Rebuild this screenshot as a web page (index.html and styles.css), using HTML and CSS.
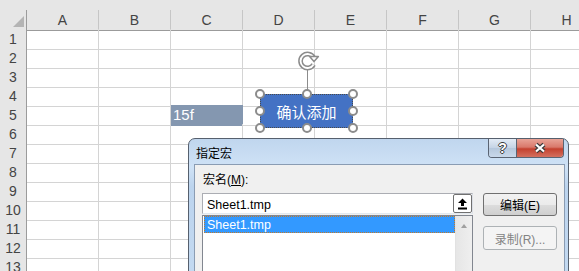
FILE: index.html
```html
<!DOCTYPE html>
<html lang="zh-CN">
<head>
    <meta charset="UTF-8">
    <title>指定宏</title>
    <link rel="stylesheet" href="styles.css">
</head>
<body>
    <div class="sheet">
        <div class="band"></div>
        <div class="row head">
            <div class="corner"><span class="tri"></span></div>
            <div>A</div><div>B</div><div>C</div><div>D</div><div>E</div><div>F</div><div>G</div><div>H</div>
        </div>
        <div class="row"><div class="num">1</div><div></div><div></div><div></div><div></div><div></div><div></div><div></div><div></div></div>
        <div class="row"><div class="num">2</div><div></div><div></div><div></div><div></div><div></div><div></div><div></div><div></div></div>
        <div class="row"><div class="num">3</div><div></div><div></div><div></div><div></div><div></div><div></div><div></div><div></div></div>
        <div class="row"><div class="num">4</div><div></div><div></div><div></div><div></div><div></div><div></div><div></div><div></div></div>
        <div class="row"><div class="num">5</div><div></div><div></div><div class="fill">15f</div><div></div><div></div><div></div><div></div><div></div></div>
        <div class="row"><div class="num">6</div><div></div><div></div><div></div><div></div><div></div><div></div><div></div><div></div></div>
        <div class="row"><div class="num">7</div><div></div><div></div><div></div><div></div><div></div><div></div><div></div><div></div></div>
        <div class="row"><div class="num">8</div><div></div><div></div><div></div><div></div><div></div><div></div><div></div><div></div></div>
        <div class="row"><div class="num">9</div><div></div><div></div><div></div><div></div><div></div><div></div><div></div><div></div></div>
        <div class="row"><div class="num">10</div><div></div><div></div><div></div><div></div><div></div><div></div><div></div><div></div></div>
        <div class="row"><div class="num">11</div><div></div><div></div><div></div><div></div><div></div><div></div><div></div><div></div></div>
        <div class="row"><div class="num">12</div><div></div><div></div><div></div><div></div><div></div><div></div><div></div><div></div></div>
        <div class="row"><div class="num">13</div><div></div><div></div><div></div><div></div><div></div><div></div><div></div><div></div></div>

        <!-- selected button shape -->
        <div class="sel">
            <svg class="rot" width="26" height="24" viewBox="0 0 26 24">
                <path d="M18.6 8.5 A7 7 0 1 0 18.6 15.5" fill="none" stroke="#8c8c8c" stroke-width="4.8"/>
                <path d="M18.6 8.5 A7 7 0 1 0 18.6 15.5" fill="none" stroke="#fff" stroke-width="1.8"/>
                <polygon points="14.6,7.5 23.4,7.5 19,12.6" fill="#fff" stroke="#8c8c8c" stroke-width="1.5" stroke-linejoin="round"/>
            </svg>
            <div class="stem"></div>
            <div class="shape">确认添加</div>
            <span class="h tl"></span><span class="h tm"></span><span class="h tr"></span>
            <span class="h ml"></span><span class="h mr"></span>
            <span class="h bl"></span><span class="h bm"></span><span class="h br"></span>
        </div>

        <!-- assign macro dialog -->
        <div class="dialog">
            <div class="titlebar">
                <span class="title">指定宏</span>
                <div class="caption">
                    <span class="cap-help">?</span>
                    <span class="cap-close">
                        <svg width="16" height="12" viewBox="0 0 16 12">
                            <path d="M4 2.5 L12 9.5 M12 2.5 L4 9.5" stroke="#3b3b3b" stroke-width="4.4"/>
                            <path d="M4 2.5 L12 9.5 M12 2.5 L4 9.5" stroke="#fff" stroke-width="2.2"/>
                        </svg>
                    </span>
                </div>
            </div>
            <div class="client">
                <div class="left-col">
                    <div class="label">宏名(<u>M</u>):</div>
                    <div class="namebox">
                        <span class="value">Sheet1.tmp</span>
                        <span class="pick">
                            <svg width="11" height="12" viewBox="0 0 11 12">
                                <polygon points="5.5,0.5 10,5 7,5 7,8 4,8 4,5 1,5" fill="#000"/>
                                <rect x="1" y="9.5" width="9" height="2" fill="#000"/>
                            </svg>
                        </span>
                    </div>
                    <div class="listbox">
                        <div class="items">
                            <div class="item selected">Sheet1.tmp</div>
                        </div>
                        <div class="vscroll"><span class="up"></span></div>
                    </div>
                </div>
                <div class="right-col">
                    <button class="btn">编辑(E)</button>
                    <button class="btn disabled">录制(R)...</button>
                </div>
            </div>
        </div>
    </div>
</body>
</html>
```

FILE: styles.css
```css
body {
    margin: 0;
    font-family: "Liberation Sans", "Noto Sans CJK SC", sans-serif;
    background: #fff;
    overflow: hidden;
}
.sheet {
    position: relative;
    width: 579px;
    height: 271px;
    overflow: hidden;
}
.band {
    height: 10px;
    background: #e6e6e6;
}
.row {
    display: grid;
    grid-template-columns: 27px repeat(8, 72px);
    height: 19px;
}
.row > div {
    box-sizing: border-box;
    border-right: 1px solid #d4d4d4;
    border-bottom: 1px solid #d4d4d4;
}
.head > div {
    background: #e6e6e6;
    border-right-color: #c6c6c6;
    border-bottom-color: #9b9b9b;
    font-size: 14px;
    line-height: 20px;
    color: #444;
    text-align: center;
}
.head .corner {
    display: flex;
    justify-content: flex-end;
    align-items: flex-end;
    padding: 0 2px 3px 0;
    border-right-color: #9b9b9b;
}
.tri {
    width: 0;
    height: 0;
    border-left: 11px solid transparent;
    border-bottom: 11px solid #b4b4b4;
}
.row .num {
    background: #e6e6e6;
    border-right-color: #9b9b9b;
    border-bottom-color: #c6c6c6;
    font-size: 14px;
    line-height: 20px;
    color: #444;
    text-align: center;
}
.row .fill {
    background: #8497b0;
    border-color: #8497b0;
    color: #fff;
    font-size: 15px;
    line-height: 19px;
    padding-left: 2px;
}

/* shape with selection handles */
.sel {
    position: absolute;
    left: 260px;
    top: 94px;
    width: 93px;
    height: 34px;
}
.shape {
    box-sizing: border-box;
    width: 100%;
    height: 100%;
    background: #4472c4;
    border: 1px dotted #4a4a4a;
    color: #fff;
    font-size: 15px;
    display: flex;
    align-items: center;
    justify-content: center;
}
.rot {
    position: absolute;
    left: 50%;
    top: -45px;
    margin-left: -12px;
}
.stem {
    position: absolute;
    left: 50%;
    top: -24px;
    width: 1px;
    height: 24px;
    background: #8c8c8c;
}
.h {
    position: absolute;
    box-sizing: border-box;
    width: 10px;
    height: 10px;
    margin: -5px 0 0 -5px;
    border: 2px solid #8c8c8c;
    border-radius: 50%;
    background: #fff;
}
.tl { left: 0; top: 0; }
.tm { left: 50%; top: 0; }
.tr { left: 100%; top: 0; }
.ml { left: 0; top: 50%; }
.mr { left: 100%; top: 50%; }
.bl { left: 0; top: 100%; }
.bm { left: 50%; top: 100%; }
.br { left: 100%; top: 100%; }

/* dialog */
.dialog {
    position: absolute;
    left: 188px;
    top: 138px;
    width: 381px;
    height: 160px;
    box-sizing: border-box;
    padding: 0 3px 0 5px;
    border: 1px solid #56606e;
    border-radius: 7px 7px 0 0;
    background: linear-gradient(to bottom, #c0d6ee 0%, #cfe2f6 18%, #bcd4ee 30%, #c5dbf2 100%);
    display: flex;
    flex-direction: column;
}
.titlebar {
    height: 28px;
    display: flex;
    align-items: flex-start;
}
.title {
    font-size: 12px;
    line-height: 14px;
    padding: 8px 0 0 2px;
    color: #000;
}
.caption {
    margin-left: auto;
    margin-right: 1px;
    display: flex;
    border: 1px solid #5a6473;
    border-top: none;
    border-radius: 0 0 4px 4px;
    overflow: hidden;
}
.cap-help {
    width: 27px;
    height: 18px;
    background: linear-gradient(to bottom, #e3ebf5, #c4d3e5 50%, #b5c7dc 51%, #c9d8ea);
    border-right: 1px solid #5a6473;
    color: #fff;
    font-weight: bold;
    font-size: 14px;
    line-height: 18px;
    text-align: center;
    text-shadow: 1px 0 0 #3b3b3b, -1px 0 0 #3b3b3b, 0 1px 0 #3b3b3b, 0 -1px 0 #3b3b3b;
}
.cap-close {
    width: 46px;
    height: 18px;
    background: linear-gradient(to bottom, #e8a397, #d9796b 45%, #c4412f 55%, #d4705f);
    display: flex;
    align-items: center;
    justify-content: center;
}
.client {
    flex: 1;
    background: #f0f0f0;
    border: 1px solid #8a9cb3;
    border-bottom: none;
    display: flex;
    padding: 7px 0 0 7px;
}
.left-col {
    width: 271px;
}
.label {
    font-size: 12px;
    line-height: 17px;
    height: 17px;
    margin-bottom: 4px;
    padding-left: 1px;
    color: #000;
}
.label u {
    text-underline-offset: 1px;
}
.namebox {
    box-sizing: border-box;
    height: 21px;
    background: #fff;
    border: 1px solid #abadb3;
    border-right-color: #dbdfe6;
    border-bottom-color: #e3e9ef;
    display: flex;
    align-items: center;
    padding-left: 4px;
    font-size: 12.5px;
}
.namebox .value {
    padding-top: 2px;
}
.pick {
    margin-left: auto;
    box-sizing: border-box;
    width: 19px;
    height: 19px;
    border: 1px solid #707070;
    border-radius: 2px;
    background: #fff;
    display: flex;
    align-items: center;
    justify-content: center;
}
.listbox {
    margin-top: 1px;
    height: 80px;
    border: 1px solid #828790;
    background: #fff;
    display: flex;
}
.items {
    flex: 1;
    padding: 0 0 0 1px;
}
.item {
    height: 17px;
    font-size: 12.5px;
    line-height: 16px;
    padding-left: 3px;
    box-sizing: border-box;
}
.item.selected {
    background: #3399ff;
    color: #fff;
    border: 1px dotted #c07a2c;
    padding-left: 2px;
}
.vscroll {
    width: 17px;
    background: linear-gradient(to right, #e6e6e6, #efefef);
    border-left: 1px solid #e2e2e2;
    display: flex;
    justify-content: center;
    padding-top: 8px;
    box-sizing: border-box;
}
.up {
    width: 0;
    height: 0;
    border-left: 3.5px solid transparent;
    border-right: 3.5px solid transparent;
    border-bottom: 4px solid #a0a0a0;
}
.right-col {
    margin-left: 10px;
    display: flex;
    flex-direction: column;
    padding-top: 21px;
}
.btn {
    width: 74px;
    height: 23px;
    border: 1px solid #707070;
    border-radius: 3px;
    background: linear-gradient(to bottom, #f2f2f2 0%, #ebebeb 50%, #dddddd 51%, #cfcfcf 100%);
    font-family: "Liberation Sans", "Noto Sans CJK SC", sans-serif;
    font-size: 12px;
    color: #000;
    padding: 0;
}
.btn.disabled {
    margin-top: 10px;
    height: 24px;
    border-color: #adb2b5;
    background: #f4f4f4;
    color: #838383;
}
```
